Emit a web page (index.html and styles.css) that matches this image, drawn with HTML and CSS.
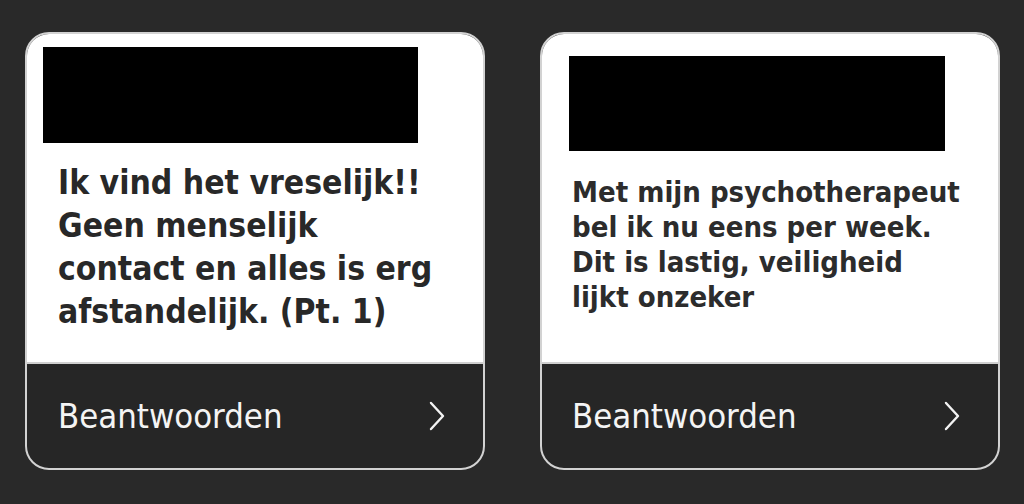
FILE: index.html
```html
<!DOCTYPE html>
<html lang="nl">
<head>
<meta charset="utf-8">
<title>Beantwoorden</title>
<link rel="stylesheet" href="styles.css">
</head>
<body>
<div class="row">
  <div class="card card-a">
    <div class="card-body">
      <div class="redact"></div>
      <p class="msg">Ik vind het vreselijk!! Geen menselijk contact en alles is erg afstandelijk. (Pt. 1)</p>
    </div>
    <div class="card-foot">
      <span class="reply">Beantwoorden</span>
      <svg class="chev" width="16" height="30" viewBox="0 0 16 30"><polyline points="2,2 14,15 2,28" fill="none" stroke="#f2f2f2" stroke-width="2.4" stroke-linecap="round" stroke-linejoin="round"/></svg>
    </div>
  </div>
  <div class="card card-b">
    <div class="card-body">
      <div class="redact"></div>
      <p class="msg">Met mijn psychotherapeut bel ik nu eens per week. Dit is lastig, veiligheid lijkt onzeker</p>
    </div>
    <div class="card-foot">
      <span class="reply">Beantwoorden</span>
      <svg class="chev" width="16" height="30" viewBox="0 0 16 30"><polyline points="2,2 14,15 2,28" fill="none" stroke="#f2f2f2" stroke-width="2.4" stroke-linecap="round" stroke-linejoin="round"/></svg>
    </div>
  </div>
</div>
</body>
</html>
```

FILE: styles.css
```css
html, body {
  margin: 0;
  padding: 0;
  background: #292929;
  font-family: "DejaVu Sans Condensed", "DejaVu Sans", sans-serif;
  font-stretch: condensed;
}
.row {
  display: flex;
  gap: 55px;
  padding: 32px 0 0 25px;
}
.card {
  width: 460px;
  height: 438px;
  box-sizing: border-box;
  border: 2px solid #d2d2d2;
  border-radius: 24px;
  overflow: hidden;
  display: flex;
  flex-direction: column;
  background: #262626;
}
.card-body {
  flex: 1;
  background: #ffffff;
}
.redact {
  background: #000;
  width: 375px;
  height: 96px;
}
.msg {
  margin: 0;
  color: #282828;
  font-weight: 700;
}
.card-a .redact {
  margin: 13px 0 0 16px;
}
.card-a .msg {
  margin: 18px 0 0 31px;
  width: 389px;
  font-size: 33.4px;
  line-height: 43px;
}
.card-b .redact {
  margin: 22px 0 0 27px;
  height: 95px;
  width: 376px;
}
.card-b .msg {
  margin: 24px 0 0 30px;
  width: 392px;
  font-size: 29px;
  line-height: 35px;
  color: #2c2c2c;
}
.card-foot {
  height: 104px;
  flex: none;
  border-top: 2px solid #cfcfcf;
  display: flex;
  align-items: center;
  justify-content: space-between;
  padding: 0 38px 0 31px;
}
.card-b .card-foot {
  padding-left: 30px;
}
.reply {
  color: #f4f4f4;
  font-size: 34.4px;
  font-weight: 400;
}
.chev {
  display: block;
}
```
